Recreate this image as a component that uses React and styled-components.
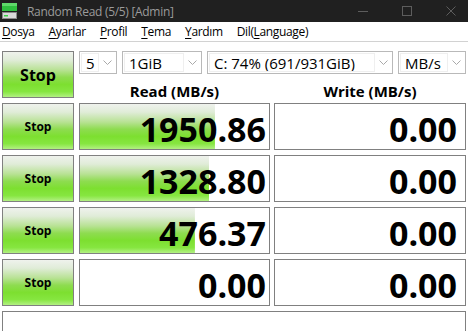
import React from "react";
import styled, { createGlobalStyle } from "styled-components";

const Global = createGlobalStyle`
  html, body { margin: 0; padding: 0; background: #ffffff; overflow: hidden; }
  body { font-family: "Open Sans", "Noto Sans", sans-serif; color: #000; }
`;

const Window = styled.div`
  width: 468px;
  height: 331px;
  overflow: hidden;
  background: #ffffff;
  display: flex;
  flex-direction: column;
`;

const TitleBar = styled.div`
  height: 22px;
  flex-shrink: 0;
  background: #202020;
  display: flex;
  align-items: center;
  padding-left: 2px;
`;

const TitleText = styled.span`
  margin-left: 10px;
  font-size: 12px;
  letter-spacing: -0.3px;
  color: #9b9b9b;
  white-space: nowrap;
`;

const Controls = styled.div`
  margin-left: auto;
  display: flex;
  align-items: center;
  gap: 34px;
  padding-right: 12px;
  height: 100%;
`;

const MenuBar = styled.div`
  height: 19px;
  flex-shrink: 0;
  display: flex;
  align-items: center;
  gap: 14px;
  padding-left: 2px;
  border-bottom: 1px solid #d2d2d2;
  font-size: 12px;
  letter-spacing: -0.35px;
  line-height: 19px;
`;

const MenuItem = styled.span`
  color: #000;
  white-space: nowrap;
  u { text-decoration: underline; text-underline-offset: 2px; }
`;

const Main = styled.div`
  display: grid;
  grid-template-columns: 73px 191px 192px;
  grid-template-rows: 23px 19px repeat(4, 47px) 40px;
  column-gap: 4px;
  row-gap: 5px;
  padding: 9px 2px 0 2px;
`;

const green = `linear-gradient(to bottom, #eff2ed 0%, #e0ecd8 18%, #b8e294 40%, #8edc50 56%, #7ddf30 72%, #86e640 88%, #b2f082 100%)`;

const StopButton = styled.div`
  width: 72px;
  box-sizing: border-box;
  border: 1px solid #808080;
  background: ${green};
  display: flex;
  align-items: center;
  justify-content: center;
  font-weight: 700;
  font-size: ${(p) => (p.$big ? "16px" : "12px")};
  color: #000;
  grid-row: ${(p) => (p.$big ? "1 / span 2" : "auto")};
`;

const ComboRow = styled.div`
  grid-column: 2 / span 2;
  display: flex;
  gap: 5px;
`;

const Combo = styled.div`
  width: ${(p) => p.$w}px;
  box-sizing: border-box;
  border: 1px solid #b9b9b9;
  background: #fff;
  display: flex;
  align-items: stretch;
`;

const ComboField = styled.div`
  flex: 1;
  margin: 1px 0 1px 1px;
  border: 1px solid #efefef;
  display: flex;
  align-items: center;
  padding-left: 4px;
  font-size: 15px;
  white-space: nowrap;
  overflow: hidden;
`;

const ComboArrow = styled.div`
  width: 17px;
  display: flex;
  align-items: center;
  justify-content: center;
`;

const Header = styled.div`
  font-weight: 700;
  font-size: 15px;
  line-height: 19px;
  text-align: center;
  padding-top: 3px;
  white-space: nowrap;
`;

const ValueBox = styled.div`
  box-sizing: border-box;
  border: 1px solid #808080;
  background-color: #ffffff;
  background-repeat: no-repeat;
  background-image: ${(p) => (p.$bar ? green : "none")};
  display: flex;
  align-items: center;
  justify-content: flex-end;
  padding-right: ${(p) => p.$pr}px;
  padding-top: 4px;
  font-weight: 700;
  font-size: 34px;
  white-space: nowrap;
`;

const Comment = styled.div`
  grid-column: 1 / -1;
  border: 1px solid #808080;
  background: #fff;
`;

const Chevron = () => (
  <svg width="9" height="6" viewBox="0 0 9 6">
    <polyline points="0.5,0.5 4.5,4.5 8.5,0.5" fill="none" stroke="#a9a9a9" strokeWidth="1" />
  </svg>
);

const AppIcon = () => (
  <svg width="15" height="16" viewBox="0 0 15 16">
    <rect x="0" y="0" width="15" height="8" fill="#2fbf3f" />
    <rect x="0" y="0" width="15" height="3" fill="#5fd86a" />
    <rect x="0.5" y="9.5" width="14" height="6" fill="#d9d9d9" stroke="#8a8a8a" />
    <rect x="2" y="12" width="4" height="1.5" fill="#3bd24a" />
  </svg>
);

const Minimize = () => (
  <svg width="10" height="10" viewBox="0 0 10 10">
    <line x1="0" y1="5.5" x2="10" y2="5.5" stroke="#5d5d5d" strokeWidth="1" />
  </svg>
);
const Maximize = () => (
  <svg width="10" height="10" viewBox="0 0 10 10">
    <rect x="0.5" y="0.5" width="9" height="9" fill="none" stroke="#5d5d5d" strokeWidth="1" />
  </svg>
);
const Close = () => (
  <svg width="10" height="10" viewBox="0 0 10 10">
    <path d="M0.5 0.5 L9.5 9.5 M9.5 0.5 L0.5 9.5" stroke="#5d5d5d" strokeWidth="1" />
  </svg>
);

const combos = [
  { w: 38, text: "5" },
  { w: 80, text: "1GiB" },
  { w: 186, text: "C: 74% (691/931GiB)" },
  { w: 68, text: "MB/s" },
];

const rows = [
  { read: "1950.86", bar: 71.4, write: "0.00" },
  { read: "1328.80", bar: 68.3, write: "0.00" },
  { read: "476.37", bar: 60.8, write: "0.00" },
  { read: "0.00", bar: 0, write: "0.00" },
];

const menus = [
  ["D", "osya"],
  ["A", "yarlar"],
  ["P", "rofil"],
  ["T", "ema"],
  ["Y", "ardım"],
];

export default function App() {
  return (
    <>
      <Global />
      <Window>
        <TitleBar>
          <AppIcon />
          <TitleText>Random Read (5/5) [Admin]</TitleText>
          <Controls>
            <Minimize />
            <Maximize />
            <Close />
          </Controls>
        </TitleBar>
        <MenuBar>
          {menus.map(([k, rest]) => (
            <MenuItem key={k}>
              <u>{k}</u>
              {rest}
            </MenuItem>
          ))}
          <MenuItem>
            Dil(<u>L</u>anguage)
          </MenuItem>
        </MenuBar>
        <Main>
          <StopButton $big>Stop</StopButton>
          <ComboRow>
            {combos.map((c) => (
              <Combo key={c.text} $w={c.w}>
                <ComboField>{c.text}</ComboField>
                <ComboArrow>
                  <Chevron />
                </ComboArrow>
              </Combo>
            ))}
          </ComboRow>
          <Header>Read (MB/s)</Header>
          <Header>Write (MB/s)</Header>
          {rows.map((r, i) => (
            <React.Fragment key={i}>
              <StopButton>Stop</StopButton>
              <ValueBox $bar={r.bar > 0} $pr={3} style={{ backgroundSize: `${r.bar}% 100%` }}>
                {r.read}
              </ValueBox>
              <ValueBox $pr={8}>{r.write}</ValueBox>
            </React.Fragment>
          ))}
          <Comment />
        </Main>
      </Window>
    </>
  );
}
